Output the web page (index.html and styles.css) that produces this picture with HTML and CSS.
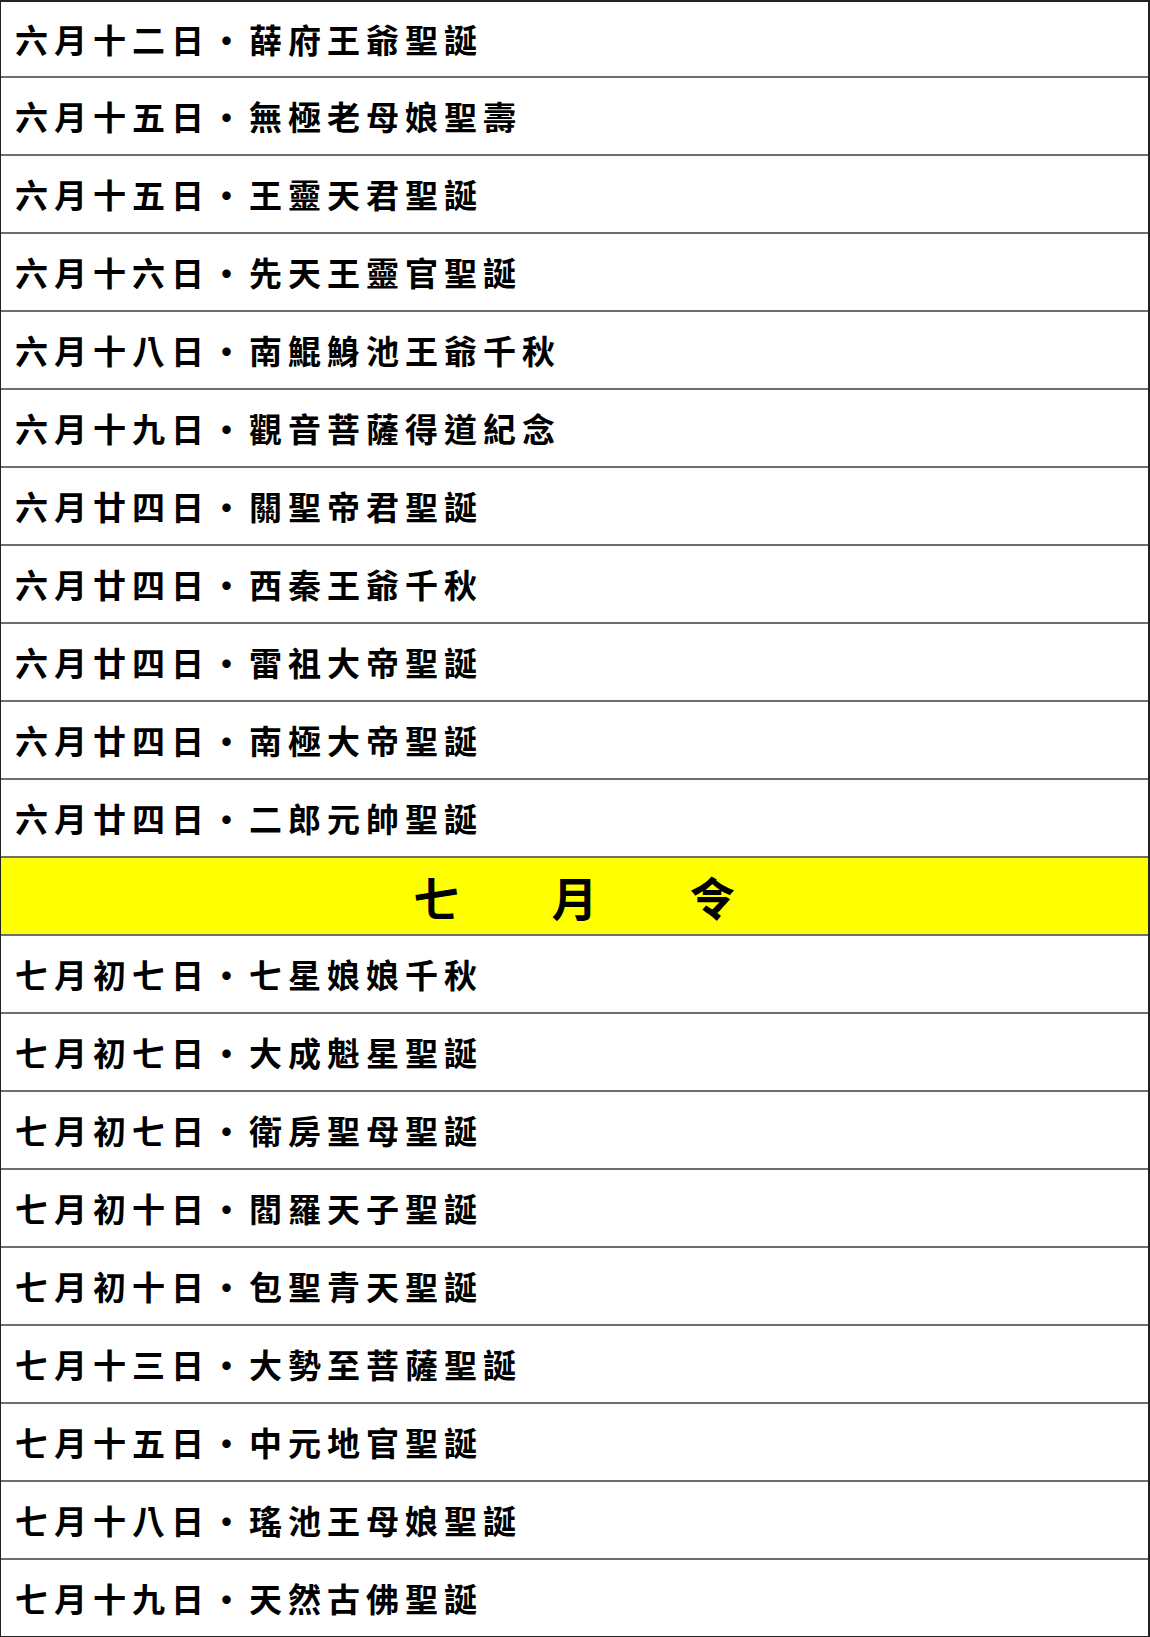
FILE: index.html
```html
<!DOCTYPE html>
<html lang="zh-Hant">
<head>
<meta charset="utf-8">
<title>六月七月神誕表</title>
<link rel="stylesheet" href="styles.css">
</head>
<body>
<div class="table">
  <div class="row">六月十二日・薛府王爺聖誕</div>
  <div class="row">六月十五日・無極老母娘聖壽</div>
  <div class="row">六月十五日・王靈天君聖誕</div>
  <div class="row">六月十六日・先天王靈官聖誕</div>
  <div class="row">六月十八日・南鯤鯓池王爺千秋</div>
  <div class="row">六月十九日・觀音菩薩得道紀念</div>
  <div class="row">六月廿四日・關聖帝君聖誕</div>
  <div class="row">六月廿四日・西秦王爺千秋</div>
  <div class="row">六月廿四日・雷祖大帝聖誕</div>
  <div class="row">六月廿四日・南極大帝聖誕</div>
  <div class="row">六月廿四日・二郎元帥聖誕</div>
  <div class="row header"><span>七</span><span>月</span><span>令</span></div>
  <div class="row">七月初七日・七星娘娘千秋</div>
  <div class="row">七月初七日・大成魁星聖誕</div>
  <div class="row">七月初七日・衛房聖母聖誕</div>
  <div class="row">七月初十日・閻羅天子聖誕</div>
  <div class="row">七月初十日・包聖青天聖誕</div>
  <div class="row">七月十三日・大勢至菩薩聖誕</div>
  <div class="row">七月十五日・中元地官聖誕</div>
  <div class="row">七月十八日・瑤池王母娘聖誕</div>
  <div class="row last">七月十九日・天然古佛聖誕</div>
</div>
</body>
</html>
```
FILE: styles.css
```css
html, body {
  margin: 0;
  padding: 0;
  background: #ffffff;
}

.table {
  width: 1150px;
  box-sizing: border-box;
  border-left: 1px solid #222;
  border-right: 2px solid #222;
  border-top: 2px solid #222;
  font-family: "Noto Sans CJK TC", "Noto Sans CJK SC", sans-serif;
  color: #000;
}

.row {
  height: 78px;
  box-sizing: border-box;
  border-bottom: 2px solid #6e6e6e;
  display: flex;
  align-items: center;
  padding-left: 14px;
  font-size: 33px;
  font-weight: 700;
  letter-spacing: 6px;
  line-height: 1;
}

.row:first-child {
  height: 76px;
}

.row.last {
  border-bottom-color: #222;
}

.header {
  background: #ffff00;
  justify-content: center;
  gap: 92px;
  padding-left: 0;
  font-size: 46px;
  letter-spacing: 0;
}
```
